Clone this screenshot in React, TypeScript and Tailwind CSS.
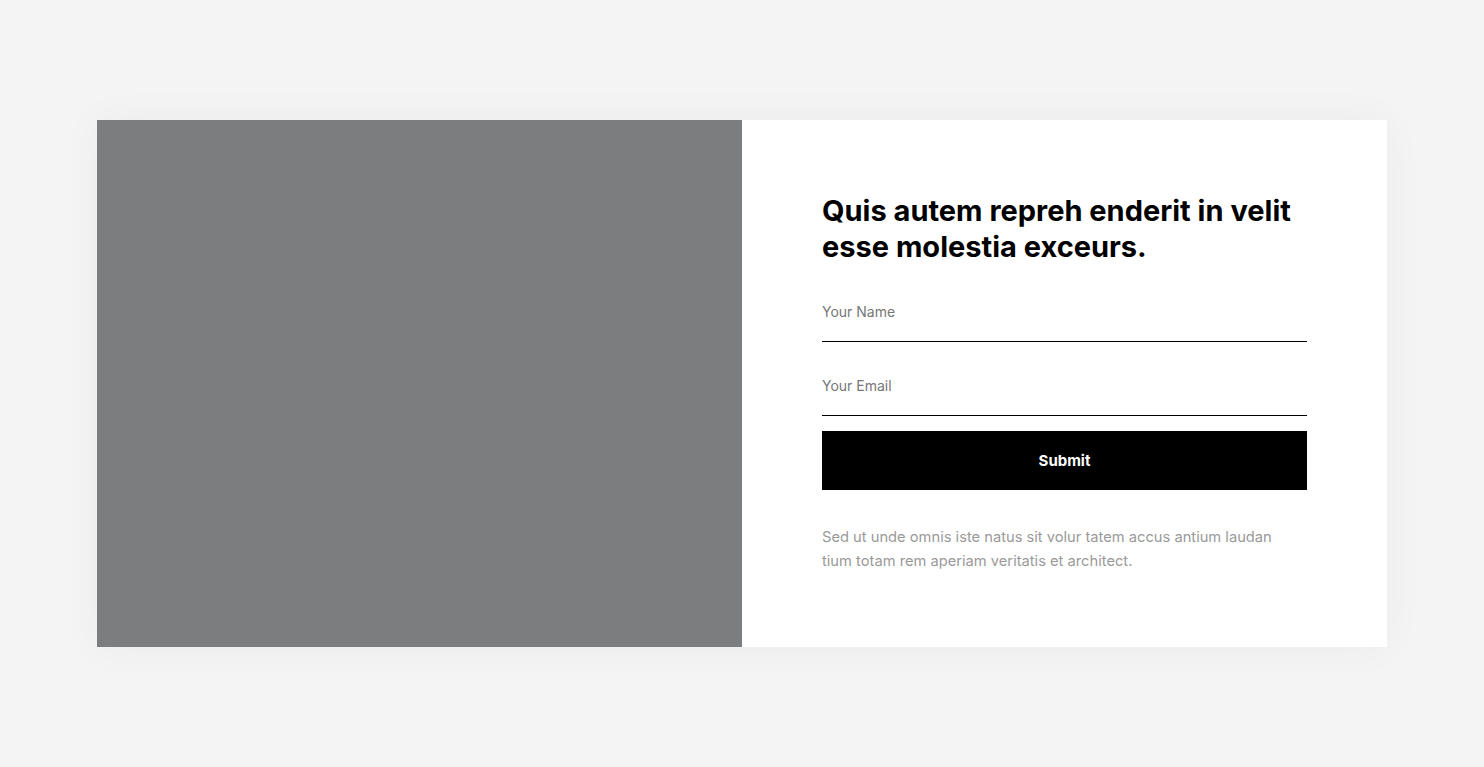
export default function App() {
  return (
    <div className="min-h-screen bg-[#f4f4f4] pt-[120px] font-['Inter',sans-serif]">
      <div className="mx-auto flex w-[1290px] h-[527px] bg-white shadow-[0_0_40px_rgba(0,0,0,0.04)]">
        <div className="w-1/2 bg-[#7c7d7e]" />
        <div className="w-1/2 pt-[73px] pl-[80px] pr-[80px]">
          <h2 className="text-[29px] leading-[36px] font-bold text-black">
            Quis autem repreh enderit in velit esse molestia exceurs.
          </h2>
          <form className="mt-[27px]" onSubmit={(e) => e.preventDefault()}>
            <input
              type="text"
              placeholder="Your Name"
              className="block h-[50px] w-full border-b border-black pb-[10px] text-[14px] text-black outline-none placeholder:text-[#777]"
            />
            <input
              type="email"
              placeholder="Your Email"
              className="mt-[24px] block h-[50px] w-full border-b border-black pb-[10px] text-[14px] text-black outline-none placeholder:text-[#777]"
            />
            <button
              type="submit"
              className="mt-[15px] block h-[59px] w-full bg-black pt-[1px] text-[15px] font-bold text-white"
            >
              Submit
            </button>
          </form>
          <p className="mt-[35px] max-w-[465px] text-[14.7px] leading-[24px] text-[#9a9a9a]">
            Sed ut unde omnis iste natus sit volur tatem accus antium laudan tium totam rem aperiam veritatis et architect.
          </p>
        </div>
      </div>
    </div>
  );
}
